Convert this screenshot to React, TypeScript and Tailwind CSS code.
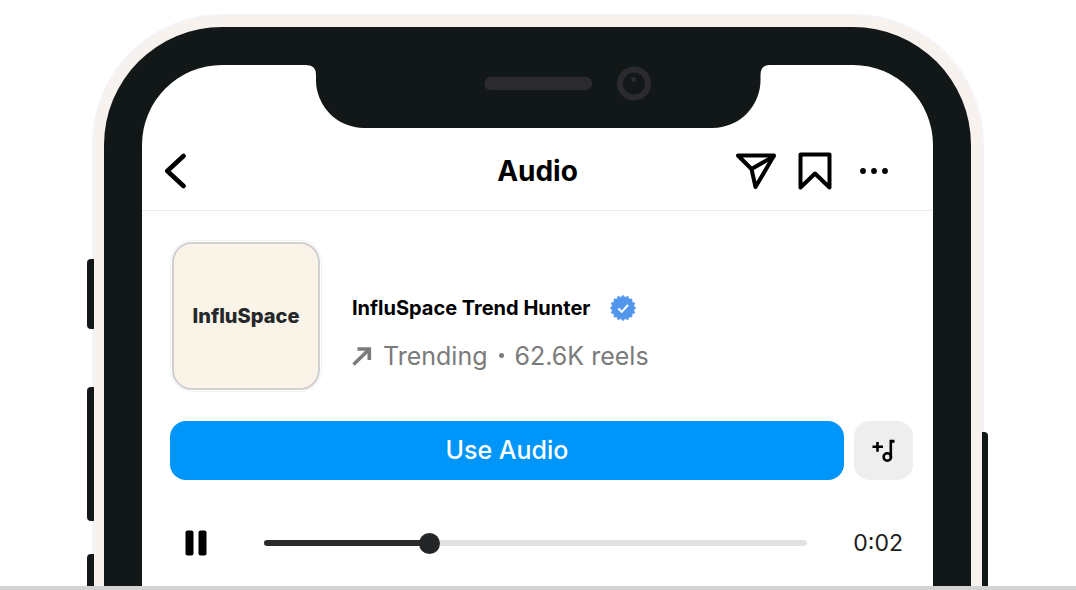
import { useState } from 'react'

const DURATION = 6750

function Notch() {
  return (
    <svg className="absolute top-0 left-1/2 -translate-x-1/2" width="463" height="63" viewBox="0 0 463 63" aria-hidden="true">
      <path d="M0 0 Q9.500 0 9.500 10 V15 A48 48 0 0 0 57.500 63 H406 A48 48 0 0 0 454 15 V10 Q454 0 463 0 Z" fill="#121717" />
      <rect x="178" y="12" width="107.500" height="13" rx="6" fill="#2b2b2d" />
      <circle cx="327.500" cy="18.500" r="14" fill="none" stroke="#2b2b2d" strokeWidth="6" />
      <circle cx="327" cy="14.500" r="2.500" fill="#2b2b2d" />
    </svg>
  )
}

function BackIcon() {
  return (
    <svg width="22" height="36" viewBox="0 0 22 36" fill="none" stroke="#000" strokeWidth="4.600" strokeLinecap="round" strokeLinejoin="round">
      <path d="M19.500 3 3.300 18 19.500 33" />
    </svg>
  )
}

function ShareIcon() {
  return (
    <svg width="42" height="38" viewBox="0 0 42 38" fill="none" stroke="#000" strokeWidth="4" strokeLinecap="round" strokeLinejoin="round">
      <path d="M3 3.500H39L20.500 35 16.500 17Z" />
      <path d="M16.500 17 38.500 4.500" />
    </svg>
  )
}

function BookmarkIcon() {
  return (
    <svg width="34" height="38" viewBox="0 0 34 38" fill="none" stroke="#000" strokeWidth="4" strokeLinecap="round" strokeLinejoin="round">
      <path d="M2.500 2.500H31.500V35.500L17 21.500 2.500 35.500Z" />
    </svg>
  )
}

function MoreIcon() {
  return (
    <svg width="30" height="8" viewBox="0 0 30 8" fill="#000">
      <circle cx="4" cy="4" r="2.900" />
      <circle cx="15" cy="4" r="2.900" />
      <circle cx="26" cy="4" r="2.900" />
    </svg>
  )
}

function VerifiedIcon() {
  // sixteen-point scalloped badge
  const points = Array.from({ length: 32 }, (_, i) => {
    const r = i % 2 === 0 ? 12.8 : 10.8
    const a = (i * Math.PI) / 16
    return `${13 + r * Math.sin(a)},${13 - r * Math.cos(a)}`
  }).join(' ')
  return (
    <svg width="26" height="26" viewBox="0 0 26 26" role="img" aria-label="Verified">
      <polygon points={points} fill="#5296ec" stroke="#5296ec" strokeWidth="0.600" strokeLinejoin="round" />
      <path d="M8.300 13.500 11.800 16.800 18 10" fill="none" stroke="#fff" strokeWidth="2" />
    </svg>
  )
}

function TrendIcon() {
  return (
    <svg width="20" height="20" viewBox="0 0 20 20" fill="none" stroke="#7b7b7b" strokeWidth="3.600">
      <path d="M1.500 18.500 17 3.500" />
      <path d="M5.500 3H17.300V14" />
    </svg>
  )
}

function AddMusicIcon() {
  return (
    <svg width="24" height="26" viewBox="0 0 24 26" fill="none" stroke="#000">
      <path d="M0.500 8.800H11M5.500 4V13.800" strokeWidth="2.600" />
      <circle cx="15.300" cy="19" r="3.700" strokeWidth="2.600" />
      <path d="M18.800 19.500V1.800" strokeWidth="2.600" />
      <path d="M18.500 3.300H22.500" strokeWidth="3" />
    </svg>
  )
}

function PauseIcon() {
  return (
    <svg width="22" height="26" viewBox="0 0 22 26" fill="#000">
      <rect x="0.500" y="0.500" width="8" height="25" rx="2" />
      <rect x="13.500" y="0.500" width="8" height="25" rx="2" />
    </svg>
  )
}

function Player() {
  const [time, setTime] = useState(2000)
  const pct = (time / DURATION) * 100
  const seconds = Math.floor(time / 1000)

  return (
    <div className="mt-[47px] flex h-8 items-center pl-[15px] pr-[10px]">
      <button type="button" aria-label="Pause" className="shrink-0">
        <PauseIcon />
      </button>
      <input
        type="range"
        aria-label="Playback position"
        min={0}
        max={DURATION}
        value={time}
        onChange={(e) => setTime(Number(e.target.value))}
        className="ml-[57px] h-[6px] min-w-0 flex-1 appearance-none rounded-full [&::-webkit-slider-thumb]:size-[21px] [&::-webkit-slider-thumb]:appearance-none [&::-webkit-slider-thumb]:rounded-full [&::-webkit-slider-thumb]:bg-[#242526]"
        style={{ background: `linear-gradient(to right, #2a2b2c ${pct}%, #e1e1e1 ${pct}%)` }}
      />
      <span className="ml-[46px] shrink-0 text-[23px] leading-8 text-[#1c1c1c]">0:{String(seconds).padStart(2, '0')}</span>
    </div>
  )
}

export default function App() {
  return (
    <div className="flex min-h-screen flex-col bg-white font-[Inter,sans-serif] text-black">
      <div className="flex flex-1 flex-col pt-[14px]">
        <div className="relative mx-auto flex w-full max-w-[892px] flex-1 flex-col rounded-t-[130px] border-2 border-b-0 border-[#f4f4f6] bg-[#f7f2ee] pl-[10px] pr-[11px] pt-[11px]">
          <div className="absolute -left-[7px] top-[243px] h-[70px] w-[7px] rounded-l-[4px] bg-[#121717]" />
          <div className="absolute -left-[7px] top-[371px] h-[134px] w-[7px] rounded-l-[4px] bg-[#121717]" />
          <div className="absolute -left-[7px] bottom-0 h-8 w-[7px] rounded-tl-[4px] bg-[#121717]" />
          <div className="absolute -right-[6px] bottom-0 top-[416px] w-[6px] rounded-tr-[4px] bg-[#121717]" />

          <div className="flex flex-1 flex-col rounded-t-[118px] bg-[#121717] px-[38px] pt-[38px]">
            <main className="relative flex-1 rounded-t-[80px] bg-white pt-[63px]">
              <Notch />

              <header className="grid h-[83px] grid-cols-[1fr_auto_1fr] items-center border-b border-[#ececec] px-[22px] pt-[3px]">
                <button type="button" aria-label="Back" className="justify-self-start">
                  <BackIcon />
                </button>
                <h1 className="text-[28px] font-bold leading-8">Audio</h1>
                <div className="flex items-center gap-[21px] justify-self-end pr-[22px]">
                  <button type="button" aria-label="Share">
                    <ShareIcon />
                  </button>
                  <button type="button" aria-label="Save">
                    <BookmarkIcon />
                  </button>
                  <button type="button" aria-label="More options" className="pl-1.5">
                    <MoreIcon />
                  </button>
                </div>
              </header>

              <div className="pb-[26px] pl-7 pr-5 pt-[29px]">
                <section className="flex items-center gap-[30px]">
                  <div className="size-[152px] shrink-0 rounded-[22px] border border-[#f1f1f1] p-px">
                    <div className="flex size-full items-center justify-center rounded-[20px] border-2 border-[#d0d0d1] bg-[#faf3e8] text-[20px] font-extrabold text-[#24282a]">
                      InfluSpace
                    </div>
                  </div>
                  <div className="flex flex-col gap-4 pt-[31px]">
                    <div className="flex items-center gap-5">
                      <h2 className="text-[20px] font-bold leading-8">InfluSpace Trend Hunter</h2>
                      <VerifiedIcon />
                    </div>
                    <p className="flex items-center gap-[11px] text-[25px] leading-8 text-[#7b7b7b]">
                      <TrendIcon />
                      <span>Trending</span>
                      <span className="size-[5px] rounded-full bg-[#7b7b7b]" />
                      <span>62.6K reels</span>
                    </p>
                  </div>
                </section>

                <div className="mt-[29px] flex gap-[10px]">
                  <button type="button" className="h-[59px] flex-1 rounded-2xl bg-[#0095f9] text-[25px] font-medium text-white">
                    Use Audio
                  </button>
                  <button type="button" aria-label="Save audio" className="flex size-[59px] items-center justify-center rounded-2xl bg-[#eeeeee]">
                    <AddMusicIcon />
                  </button>
                </div>

                <Player />
              </div>
            </main>
          </div>
        </div>
      </div>
      <div className="h-1 bg-[#d3d3d3]" />
    </div>
  )
}
